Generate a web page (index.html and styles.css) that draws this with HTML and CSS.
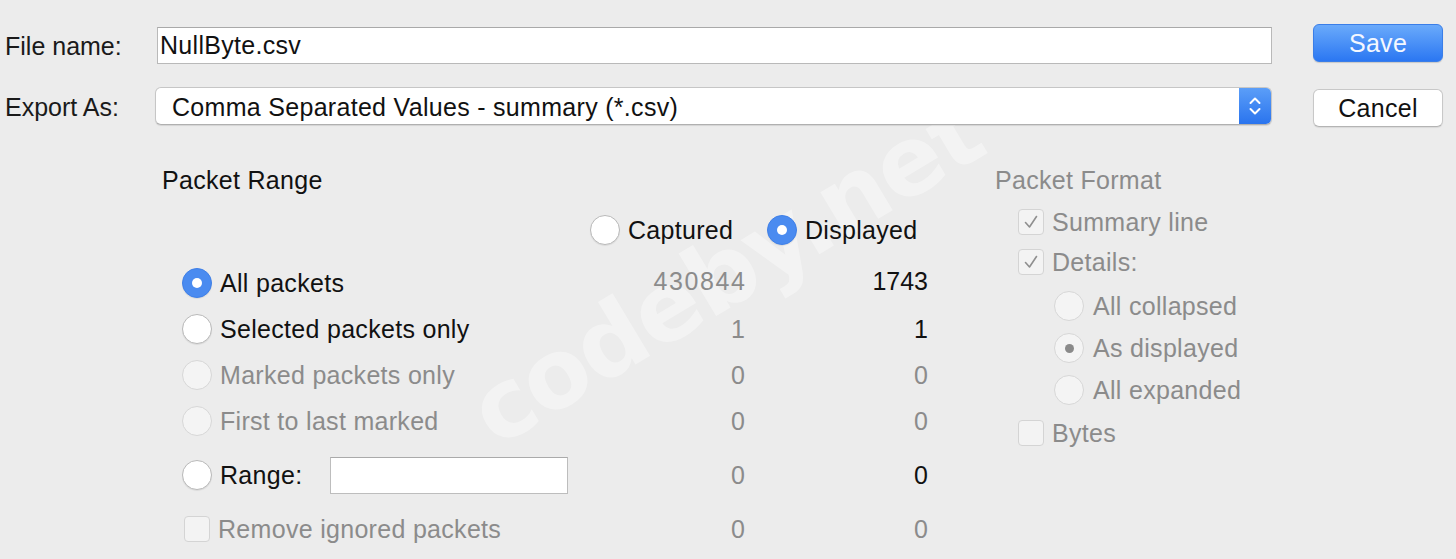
FILE: index.html
```html
<!DOCTYPE html>
<html lang="en">
<head>
<meta charset="utf-8">
<title>Export Packet Dissections</title>
<link rel="stylesheet" href="styles.css">
</head>
<body>
<div class="watermark">codeby.net</div>
<div class="dialog">
  <div class="top">
    <div class="label l1">File name:</div>
    <div class="textfield">NullByte.csv</div>
    <div class="btn primary">Save</div>
    <div class="label l2">Export As:</div>
    <div class="select">
      <span class="select-text">Comma Separated Values - summary (*.csv)</span>
      <span class="stepper">
        <svg width="14" height="24" viewBox="0 0 14 24"><path d="M2.5 9 L7 4.5 L11.5 9" fill="none" stroke="#fff" stroke-width="2" stroke-linecap="round" stroke-linejoin="round"/><path d="M2.5 15 L7 19.5 L11.5 15" fill="none" stroke="#fff" stroke-width="2" stroke-linecap="round" stroke-linejoin="round"/></svg>
      </span>
    </div>
    <div class="btn cancel">Cancel</div>
  </div>

  <div class="bottom">
    <div class="range-panel">
      <div class="heading">Packet Range</div>
      <div class="range-grid">
        <div class="cell hdr"></div>
        <div class="cell hdr opt"><span class="radio"></span><span>Captured</span></div>
        <div class="cell hdr opt"><span class="radio on"></span><span>Displayed</span></div>

        <div class="cell opt"><span class="radio on"></span><span>All packets</span></div>
        <div class="cell num dim up wide">430844</div>
        <div class="cell num up">1743</div>

        <div class="cell opt"><span class="radio"></span><span>Selected packets only</span></div>
        <div class="cell num dim">1</div>
        <div class="cell num">1</div>

        <div class="cell opt dim"><span class="radio off"></span><span>Marked packets only</span></div>
        <div class="cell num dim">0</div>
        <div class="cell num dim">0</div>

        <div class="cell opt dim"><span class="radio off"></span><span>First to last marked</span></div>
        <div class="cell num dim">0</div>
        <div class="cell num dim">0</div>

        <div class="cell opt"><span class="radio"></span><span class="range-label">Range:</span><span class="range-input"></span></div>
        <div class="cell num dim">0</div>
        <div class="cell num">0</div>

        <div class="cell opt dim"><span class="check off small"></span><span>Remove ignored packets</span></div>
        <div class="cell num dim">0</div>
        <div class="cell num dim">0</div>
      </div>
    </div>

    <div class="format-panel">
      <div class="heading dim">Packet Format</div>
      <div class="fmt-row r1 dim"><span class="check off"><svg width="18" height="18" viewBox="0 0 18 18"><path d="M3.5 9.5 L7.5 14 L14.5 3.5" fill="none" stroke="#8f8f8f" stroke-width="1.6" stroke-linecap="round" stroke-linejoin="round"/></svg></span><span>Summary line</span></div>
      <div class="fmt-row r2 dim"><span class="check off"><svg width="18" height="18" viewBox="0 0 18 18"><path d="M3.5 9.5 L7.5 14 L14.5 3.5" fill="none" stroke="#8f8f8f" stroke-width="1.6" stroke-linecap="round" stroke-linejoin="round"/></svg></span><span>Details:</span></div>
      <div class="fmt-row sub r3 dim"><span class="radio off"></span><span>All collapsed</span></div>
      <div class="fmt-row sub r4 dim"><span class="radio off dot"></span><span>As displayed</span></div>
      <div class="fmt-row sub r5 dim"><span class="radio off"></span><span>All expanded</span></div>
      <div class="fmt-row r6 dim"><span class="check off"></span><span>Bytes</span></div>
    </div>
  </div>
</div>
</body>
</html>
```

FILE: styles.css
```css
html, body {
  margin: 0;
  padding: 0;
}
body {
  width: 1456px;
  height: 559px;
  overflow: hidden;
  background: #ececec;
  font-family: "Liberation Sans", Arial, sans-serif;
  font-size: 25px;
  letter-spacing: 0.3px;
  color: #111;
  position: relative;
}
.dialog {
  display: flex;
  flex-direction: column;
  position: relative;
  z-index: 1;
}

/* top: file name / export as */
.top {
  display: grid;
  grid-template-columns: 111px 1115px 130px;
  grid-template-rows: 40px 40px;
  column-gap: 41px;
  row-gap: 23px;
  padding: 24px 13px 0 5px;
}
.label {
  align-self: center;
  color: #1a1a1a;
  white-space: nowrap;
  letter-spacing: 0;
}
.l1 { margin-top: 4px; }
.l2 { margin-top: 0; }
.textfield {
  align-self: end;
  height: 37px;
  box-sizing: border-box;
  background: #fff;
  border: 1px solid #b9b9b9;
  border-top-color: #a9a9a9;
  padding: 0 0 0 2px;
  display: flex;
  align-items: center;
  color: #111;
}
.btn {
  height: 38px;
  box-sizing: border-box;
  border-radius: 6px;
  display: flex;
  align-items: center;
  justify-content: center;
}
.btn.primary {
  align-self: start;
  color: #f4f8ff;
  background: linear-gradient(#6aaafb, #2b77f2);
  border: 1px solid #3a7ee8;
  box-shadow: 0 1px 1px rgba(0,0,0,0.15);
}
.btn.cancel {
  align-self: end;
  background: #fff;
  border: 1px solid #c8c8c8;
  border-bottom-color: #b4b4b4;
  box-shadow: 0 1px 1px rgba(0,0,0,0.08);
  color: #111;
}
.select {
  align-self: start;
  margin-left: -2px;
  height: 38px;
  box-sizing: border-box;
  background: #fff;
  border: 1px solid #c6c6c6;
  border-bottom-color: #b0b0b0;
  border-radius: 6px;
  box-shadow: 0 1px 1px rgba(0,0,0,0.1);
  display: flex;
  align-items: center;
  overflow: hidden;
}
.select-text {
  flex: 1;
  padding-left: 16px;
  margin-top: 3px;
}
.stepper {
  width: 32px;
  align-self: stretch;
  background: linear-gradient(#5b9ef8, #2a74ee);
  display: flex;
  align-items: center;
  justify-content: center;
}

/* bottom panels */
.bottom {
  display: flex;
  padding-top: 38px;
}
.heading {
  height: 30px;
  line-height: 30px;
  white-space: nowrap;
}
.range-panel {
  width: 995px;
  flex: none;
  padding-left: 162px;
  box-sizing: border-box;
}
.range-grid {
  display: grid;
  grid-template-columns: 386px 155px 161px;
  grid-template-rows: 50px 46px 46px 46px 46px 62px 46px;
  column-gap: 22px;
  margin-top: 15px;
  margin-left: 20px;
}
.cell {
  display: flex;
  align-items: center;
  white-space: nowrap;
}
.cell.hdr {
  align-self: start;
  height: 40px;
}
.cell.num {
  justify-content: flex-end;
  letter-spacing: 0;
}
.cell.num.wide {
  letter-spacing: 1.6px;
  margin-right: -1.6px;
}
.cell.up {
  margin-top: -3px;
}
.opt > span + span {
  margin-left: 8px;
}
.dim {
  color: #8b8b8b;
}
.radio {
  width: 30px;
  height: 30px;
  box-sizing: border-box;
  border-radius: 50%;
  background: #fff;
  border: 1px solid #b9b9b9;
  box-shadow: 0 1px 1px rgba(0,0,0,0.08);
  flex: none;
  display: flex;
  align-items: center;
  justify-content: center;
}
.radio.on {
  background: #4a8bf0;
  border-color: #3f80e8;
}
.radio.on::after {
  content: "";
  width: 10px;
  height: 10px;
  border-radius: 50%;
  background: #fff;
}
.radio.off {
  background: #f4f4f4;
  border-color: #d7d7d7;
  box-shadow: none;
}
.radio.dot::after {
  content: "";
  width: 9px;
  height: 9px;
  border-radius: 50%;
  background: #8a8a8a;
}
.check {
  width: 26px;
  height: 26px;
  box-sizing: border-box;
  border-radius: 4px;
  background: #fff;
  border: 1px solid #bdbdbd;
  flex: none;
  display: flex;
  align-items: center;
  justify-content: center;
}
.check.off {
  background: #f3f3f3;
  border-color: #d4d4d4;
}
.check.small {
  margin-left: 2px;
}
.opt .range-label {
  color: #111;
}
.opt .range-input {
  display: block;
  margin-left: auto;
  width: 238px;
  height: 37px;
  box-sizing: border-box;
  background: #fff;
  border: 1px solid #bdbdbd;
  border-top-color: #aaaaaa;
}

.format-panel {
  display: flex;
  flex-direction: column;
}
.fmt-row {
  display: flex;
  align-items: center;
  margin-left: 23px;
  height: 40px;
  white-space: nowrap;
}
.fmt-row > span + span {
  margin-left: 8px;
}
.fmt-row.sub {
  margin-left: 59px;
  height: 42px;
}
.fmt-row.sub > span + span {
  margin-left: 9px;
}
.fmt-row.r1 { margin-top: 7px; }
.fmt-row.r3 { margin-top: 3px; }
.fmt-row.r6 { margin-top: 2px; }

.watermark {
  position: absolute;
  z-index: 0;
  left: 508px;
  top: 356px;
  font-family: "DejaVu Sans", sans-serif;
  font-weight: bold;
  font-size: 96px;
  letter-spacing: -2px;
  color: rgba(255,255,255,0.38);
  transform: rotate(-31deg);
  transform-origin: left bottom;
  white-space: nowrap;
  pointer-events: none;
}
```
